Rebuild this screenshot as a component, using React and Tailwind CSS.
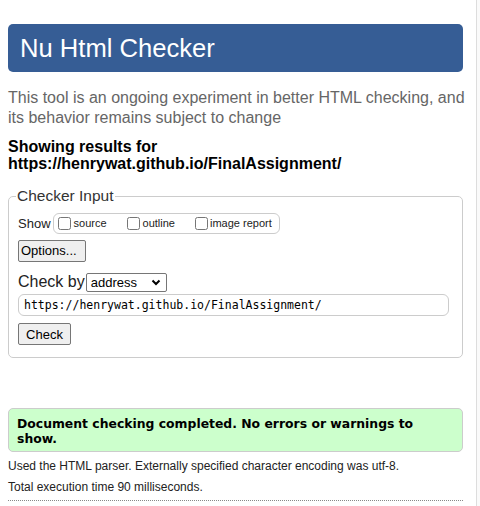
import { useState } from "react";

export default function App() {
  const [url, setUrl] = useState("https://henrywat.github.io/FinalAssignment/");
  const [show, setShow] = useState({ source: false, outline: false, image: false });

  return (
    <div className="min-h-[506px] w-[480px] flex bg-white font-['Liberation_Sans',Arial,sans-serif] text-[#222]">
      <div className="w-[476px] px-2 pt-6">
        {/* Title bar */}
        <h1 className="w-[455px] h-12 rounded-[5px] bg-[#365d95] text-white text-[25.6px] leading-[48px] pl-3">
          Nu Html Checker
        </h1>

        <p className="mt-[16px] text-[16px] leading-[20px] text-[#666]">
          This tool is an ongoing experiment in better HTML checking, and its behavior remains subject to change
        </p>

        <p className="mt-[10px] text-[16px] leading-[17px] font-bold text-black">
          Showing results for
          <br />
          https://henrywat.github.io/FinalAssignment/
        </p>

        {/* Checker Input */}
        <fieldset className="mt-[15px] w-[455px] border border-[#ccc] rounded-[5px] px-[9px] pb-[11px]">
          <legend className="text-[15.5px] leading-[18px] text-[#333] px-px ml-[-2px]">Checker Input</legend>

          <div className="flex items-center mt-[8px] text-[13px] text-[#222]">
            <span className="mr-[2px]">Show</span>
            <div className="flex items-center h-[21px] border border-[#ccc] rounded-[6px] pl-1 pr-[7px]">
              <label className="flex items-center">
                <input
                  type="checkbox"
                  checked={show.source}
                  onChange={() => setShow({ ...show, source: !show.source })}
                  className="m-0 w-[13px] h-[13px]"
                />
                <span className="ml-[3px] text-[11px]">source</span>
              </label>
              <label className="flex items-center ml-[20px]">
                <input
                  type="checkbox"
                  checked={show.outline}
                  onChange={() => setShow({ ...show, outline: !show.outline })}
                  className="m-0 w-[13px] h-[13px]"
                />
                <span className="ml-[3px] text-[11px]">outline</span>
              </label>
              <label className="flex items-center ml-[20px]">
                <input
                  type="checkbox"
                  checked={show.image}
                  onChange={() => setShow({ ...show, image: !show.image })}
                  className="m-0 w-[13px] h-[13px]"
                />
                <span className="ml-[2px] text-[11px]">image report</span>
              </label>
            </div>
          </div>

          <button className="mt-[6px] h-[22px] w-[68px] border border-[#767676] rounded-[2px] bg-[#efefef] text-[13px] text-black text-left pl-[2px]">
            Options...
          </button>

          <div className="flex items-center mt-[8px] text-[16px] text-[#222]">
            <span className="mr-px">Check by</span>
            <div className="flex items-center justify-between h-[19px] w-[81px] border border-[#767676] rounded-[2px] pl-1 pr-[5px] text-[13px] text-black">
              <span>address</span>
              <svg width="10" height="7" viewBox="0 0 10 7">
                <path d="M1.5 1.5 L5 5 L8.5 1.5" stroke="black" strokeWidth="2" fill="none" />
              </svg>
            </div>
          </div>

          <input
            value={url}
            onChange={(e) => setUrl(e.target.value)}
            className="mt-0 block w-[431px] h-[22px] border border-[#ccc] rounded-[6px] px-[5px] font-['DejaVu_Sans_Mono',monospace] text-[11.5px] text-black"
          />

          <button className="mt-[7px] h-[22px] w-[53px] border border-[#767676] rounded-[2px] bg-[#efefef] text-[13px] text-black">
            Check
          </button>
        </fieldset>

        {/* Result */}
        <div className="mt-[50px] w-[455px] border border-[#ccc] rounded-[5px] bg-[#ccffcc] px-2 pt-[7px] pb-[5px] font-['DejaVu_Sans',Verdana,sans-serif] font-bold text-[12.4px] leading-[15px] text-black">
          Document checking completed. No errors or warnings to show.
        </div>

        <p className="mt-[4px] text-[12px] leading-[21px] text-[#222]">
          Used the HTML parser. Externally specified character encoding was utf-8.
        </p>
        <p className="text-[12px] leading-[21px] text-[#222]">Total execution time 90 milliseconds.</p>
        <div className="mt-[2px] w-[455px] border-t border-dotted border-[#888]"></div>
      </div>
      <div className="flex-1 border-l border-[#ddd] bg-[#fafafa]"></div>
    </div>
  );
}
